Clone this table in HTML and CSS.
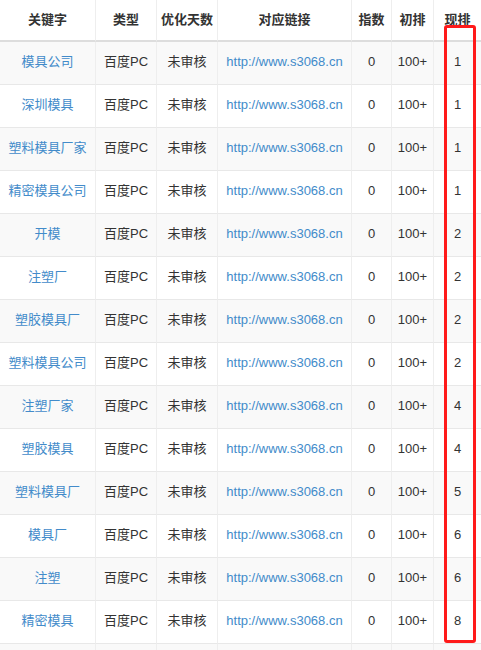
FILE: index.html
```html
<!DOCTYPE html>
<html lang="zh-CN">
<head>
<meta charset="utf-8">
<title>关键字排名</title>
<link rel="stylesheet" href="styles.css">
</head>
<body>
<div class="wrap">
  <table class="rank-table">
    <colgroup>
      <col class="c-kw"><col class="c-type"><col class="c-days"><col class="c-url"><col class="c-idx"><col class="c-first"><col class="c-now">
    </colgroup>
    <thead>
      <tr><th>关键字</th><th>类型</th><th>优化天数</th><th>对应链接</th><th>指数</th><th>初排</th><th>现排</th></tr>
    </thead>
    <tbody>
      <tr><td><a class="lnk">模具公司</a></td><td>百度PC</td><td>未审核</td><td><a class="lnk">http://www.s3068.cn</a></td><td>0</td><td>100+</td><td>1</td></tr>
      <tr><td><a class="lnk">深圳模具</a></td><td>百度PC</td><td>未审核</td><td><a class="lnk">http://www.s3068.cn</a></td><td>0</td><td>100+</td><td>1</td></tr>
      <tr><td><a class="lnk">塑料模具厂家</a></td><td>百度PC</td><td>未审核</td><td><a class="lnk">http://www.s3068.cn</a></td><td>0</td><td>100+</td><td>1</td></tr>
      <tr><td><a class="lnk">精密模具公司</a></td><td>百度PC</td><td>未审核</td><td><a class="lnk">http://www.s3068.cn</a></td><td>0</td><td>100+</td><td>1</td></tr>
      <tr><td><a class="lnk">开模</a></td><td>百度PC</td><td>未审核</td><td><a class="lnk">http://www.s3068.cn</a></td><td>0</td><td>100+</td><td>2</td></tr>
      <tr><td><a class="lnk">注塑厂</a></td><td>百度PC</td><td>未审核</td><td><a class="lnk">http://www.s3068.cn</a></td><td>0</td><td>100+</td><td>2</td></tr>
      <tr><td><a class="lnk">塑胶模具厂</a></td><td>百度PC</td><td>未审核</td><td><a class="lnk">http://www.s3068.cn</a></td><td>0</td><td>100+</td><td>2</td></tr>
      <tr><td><a class="lnk">塑料模具公司</a></td><td>百度PC</td><td>未审核</td><td><a class="lnk">http://www.s3068.cn</a></td><td>0</td><td>100+</td><td>2</td></tr>
      <tr><td><a class="lnk">注塑厂家</a></td><td>百度PC</td><td>未审核</td><td><a class="lnk">http://www.s3068.cn</a></td><td>0</td><td>100+</td><td>4</td></tr>
      <tr><td><a class="lnk">塑胶模具</a></td><td>百度PC</td><td>未审核</td><td><a class="lnk">http://www.s3068.cn</a></td><td>0</td><td>100+</td><td>4</td></tr>
      <tr><td><a class="lnk">塑料模具厂</a></td><td>百度PC</td><td>未审核</td><td><a class="lnk">http://www.s3068.cn</a></td><td>0</td><td>100+</td><td>5</td></tr>
      <tr><td><a class="lnk">模具厂</a></td><td>百度PC</td><td>未审核</td><td><a class="lnk">http://www.s3068.cn</a></td><td>0</td><td>100+</td><td>6</td></tr>
      <tr><td><a class="lnk">注塑</a></td><td>百度PC</td><td>未审核</td><td><a class="lnk">http://www.s3068.cn</a></td><td>0</td><td>100+</td><td>6</td></tr>
      <tr><td><a class="lnk">精密模具</a></td><td>百度PC</td><td>未审核</td><td><a class="lnk">http://www.s3068.cn</a></td><td>0</td><td>100+</td><td>8</td></tr>
      <tr class="cut-row"><td></td><td></td><td></td><td></td><td></td><td></td><td></td></tr>
    </tbody>
  </table>
  <div class="highlight"></div>
</div>
</body>
</html>
```

FILE: styles.css
```css
html, body {
  margin: 0;
  padding: 0;
  background: #fff;
}
body {
  font-family: "Liberation Sans", "Noto Sans CJK SC", sans-serif;
  font-size: 13px;
  line-height: 20px;
  color: #333;
}
.wrap {
  position: relative;
  width: 481px;
  height: 650px;
  overflow: hidden;
}
.rank-table {
  width: 481px;
  table-layout: fixed;
  border-collapse: separate;
  border-spacing: 0;
}
.c-kw { width: 96px; }
.c-type { width: 61px; }
.c-days { width: 61px; }
.c-url { width: 134px; }
.c-idx { width: 40px; }
.c-first { width: 42px; }
.c-now { width: 47px; }

.rank-table th,
.rank-table td {
  padding: 0;
  text-align: center;
  vertical-align: middle;
  white-space: nowrap;
  overflow: hidden;
  border-right: 1px solid #eee;
}
.rank-table th:last-child,
.rank-table td:last-child {
  border-right: none;
}
.rank-table th {
  height: 40px;
  font-weight: bold;
  color: #333;
  border-bottom: 2px solid #ddd;
}
.rank-table td {
  height: 40px;
  padding-bottom: 2px;
  border-bottom: 1px solid #e8e8e8;
}
.rank-table tbody tr:nth-child(odd) td {
  background: #f9f9f9;
}
.lnk {
  color: #428bca;
  text-decoration: none;
}
.highlight {
  position: absolute;
  left: 444px;
  top: 25px;
  width: 26px;
  height: 612px;
  border: 3px solid #ff1a1a;
  border-radius: 3px;
}
```
